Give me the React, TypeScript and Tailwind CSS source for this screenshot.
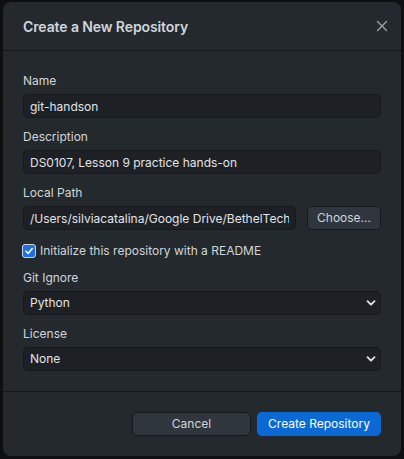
import React, { useState } from 'react';

const Chevron: React.FC = () => (
  <svg width="10" height="10" viewBox="0 0 10 10" className="shrink-0">
    <path d="M1.5 3.2 L5 6.7 L8.5 3.2" fill="none" stroke="#e1e4e8" strokeWidth="1.8" strokeLinecap="round" strokeLinejoin="round" />
  </svg>
);

const Field: React.FC<{ label: string; className?: string; children: React.ReactNode }> = ({ label, className = '', children }) => (
  <div className={'flex flex-col ' + className}>
    <label className="text-[12px] leading-[15px] text-[#d1d5da] mb-[6px]">{label}</label>
    {children}
  </div>
);

const inputCls =
  'h-[24px] w-full rounded-[5px] border border-[#16191c] bg-[#1d2125] px-[6px] text-[12px] text-[#e1e4e8] outline-none';

export default function App() {
  const [readme, setReadme] = useState(true);

  return (
    <div className="w-[404px] h-[459px] bg-[#0e0f11] py-[2px] px-[3px] font-['Inter',sans-serif]">
      <div className="h-[454px] rounded-[8px] bg-[#24292e] flex flex-col overflow-hidden">
        {/* Header */}
        <div className="h-[49px] flex items-center justify-between pl-[20px] pr-[13px] border-b border-[#16191c] shrink-0">
          <h2 className="text-[14px] font-semibold text-[#d1d5da] tracking-[-0.1px]">Create a New Repository</h2>
          <button className="text-[#9aa1a8]">
            <svg width="12" height="12" viewBox="0 0 12 12">
              <path d="M1.5 1.5 L10.5 10.5 M10.5 1.5 L1.5 10.5" stroke="currentColor" strokeWidth="1.4" strokeLinecap="round" />
            </svg>
          </button>
        </div>

        {/* Body */}
        <div className="flex-1 flex flex-col gap-[11px] pl-[20px] pr-[20px] pt-[22px]">
          <Field label="Name">
            <input className={inputCls} defaultValue="git-handson" />
          </Field>
          <Field label="Description">
            <input className={inputCls} defaultValue="DS0107, Lesson 9 practice hands-on" />
          </Field>
          <Field label="Local Path">
            <div className="flex gap-[11px]">
              <input
                className={inputCls + ' flex-1 min-w-0'}
                defaultValue="/Users/silviacatalina/Google Drive/BethelTech/Gitting"
              />
              <button className="h-[24px] w-[74px] shrink-0 rounded-[5px] border border-[#16191c] bg-[#2f363d] text-[12px] text-[#d1d5da]">
                Choose…
              </button>
            </div>
            <label className="flex items-center gap-[4px] mt-[12px] -ml-[1px] text-[12px] text-[#d1d5da] cursor-pointer">
              <span
                onClick={() => setReadme(!readme)}
                className="w-[14px] h-[14px] rounded-[3px] bg-[#1f6feb] border border-[#d1d5da] flex items-center justify-center"
              >
                {readme && (
                  <svg width="10" height="10" viewBox="0 0 10 10">
                    <path d="M2 5.2 L4.2 7.4 L8.2 2.6" fill="none" stroke="#fff" strokeWidth="1.6" strokeLinecap="round" strokeLinejoin="round" />
                  </svg>
                )}
              </span>
              Initialize this repository with a README
            </label>
          </Field>
          <Field label="Git Ignore" className="-mt-[1px]">
            <div className={inputCls + ' flex items-center justify-between pr-[4px]'}>
              <span>Python</span>
              <Chevron />
            </div>
          </Field>
          <Field label="License">
            <div className={inputCls + ' flex items-center justify-between pr-[4px]'}>
              <span>None</span>
              <Chevron />
            </div>
          </Field>
        </div>

        {/* Footer */}
        <div className="h-[65px] shrink-0 border-t border-[#16191c] flex items-start justify-end gap-[6px] pt-[20px] pr-[20px]">
          <button className="h-[24px] w-[119px] rounded-[5px] border border-[#16191c] bg-[#2f363d] text-[12px] text-[#d1d5da]">
            Cancel
          </button>
          <button className="h-[24px] w-[124px] rounded-[5px] bg-[#0b69d6] text-[12px] text-white">
            Create Repository
          </button>
        </div>
      </div>
    </div>
  );
}
